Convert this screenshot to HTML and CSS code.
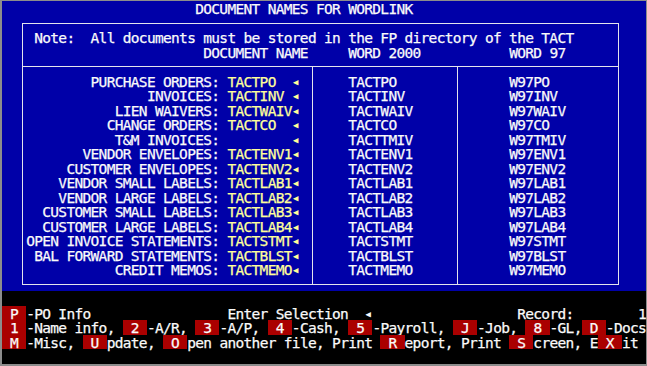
FILE: index.html
```html
<!DOCTYPE html>
<html lang="en">
<head>
  <meta charset="UTF-8" />
  <title>Document Names for WordLink</title>
  <link rel="stylesheet" href="styles.css">
</head>
<body>

  <div class="screen">
    <div class="panel">
      <div class="title">DOCUMENT NAMES FOR WORDLINK</div>

      <div class="frame">
        <div class="note">Note:  All documents must be stored in the FP directory of the TACT</div>
        <div class="heads">DOCUMENT NAME     WORD 2000           WORD 97</div>

        <div class="cols">
          <div class="col col-doc">
            <div class="entry"><span class="label">PURCHASE ORDERS:</span><span class="value">TACTPO</span><span class="arrow">◀</span></div>
            <div class="entry"><span class="label">INVOICES:</span><span class="value">TACTINV</span><span class="arrow">◀</span></div>
            <div class="entry"><span class="label">LIEN WAIVERS:</span><span class="value">TACTWAIV</span><span class="arrow">◀</span></div>
            <div class="entry"><span class="label">CHANGE ORDERS:</span><span class="value">TACTCO</span><span class="arrow">◀</span></div>
            <div class="entry"><span class="label">T&amp;M INVOICES:</span><span class="value"></span><span class="arrow">◀</span></div>
            <div class="entry"><span class="label">VENDOR ENVELOPES:</span><span class="value">TACTENV1</span><span class="arrow">◀</span></div>
            <div class="entry"><span class="label">CUSTOMER ENVELOPES:</span><span class="value">TACTENV2</span><span class="arrow">◀</span></div>
            <div class="entry"><span class="label">VENDOR SMALL LABELS:</span><span class="value">TACTLAB1</span><span class="arrow">◀</span></div>
            <div class="entry"><span class="label">VENDOR LARGE LABELS:</span><span class="value">TACTLAB2</span><span class="arrow">◀</span></div>
            <div class="entry"><span class="label">CUSTOMER SMALL LABELS:</span><span class="value">TACTLAB3</span><span class="arrow">◀</span></div>
            <div class="entry"><span class="label">CUSTOMER LARGE LABELS:</span><span class="value">TACTLAB4</span><span class="arrow">◀</span></div>
            <div class="entry"><span class="label">OPEN INVOICE STATEMENTS:</span><span class="value">TACTSTMT</span><span class="arrow">◀</span></div>
            <div class="entry"><span class="label">BAL FORWARD STATEMENTS:</span><span class="value">TACTBLST</span><span class="arrow">◀</span></div>
            <div class="entry"><span class="label">CREDIT MEMOS:</span><span class="value">TACTMEMO</span><span class="arrow">◀</span></div>
          </div>

          <div class="col col-w2k">
            <div class="cell">TACTPO</div>
            <div class="cell">TACTINV</div>
            <div class="cell">TACTWAIV</div>
            <div class="cell">TACTCO</div>
            <div class="cell">TACTTMIV</div>
            <div class="cell">TACTENV1</div>
            <div class="cell">TACTENV2</div>
            <div class="cell">TACTLAB1</div>
            <div class="cell">TACTLAB2</div>
            <div class="cell">TACTLAB3</div>
            <div class="cell">TACTLAB4</div>
            <div class="cell">TACTSTMT</div>
            <div class="cell">TACTBLST</div>
            <div class="cell">TACTMEMO</div>
          </div>

          <div class="col col-w97">
            <div class="cell">W97PO</div>
            <div class="cell">W97INV</div>
            <div class="cell">W97WAIV</div>
            <div class="cell">W97CO</div>
            <div class="cell">W97TMIV</div>
            <div class="cell">W97ENV1</div>
            <div class="cell">W97ENV2</div>
            <div class="cell">W97LAB1</div>
            <div class="cell">W97LAB2</div>
            <div class="cell">W97LAB3</div>
            <div class="cell">W97LAB4</div>
            <div class="cell">W97STMT</div>
            <div class="cell">W97BLST</div>
            <div class="cell">W97MEMO</div>
          </div>
        </div>
      </div>
    </div>

    <!-- menu / status lines -->
    <div class="menu">
      <div class="mline"><span class="key"> P </span>-PO Info                 Enter Selection  <span class="arrow">◀</span>                  Record:        1</div>
      <div class="mline"><span class="key"> 1 </span>-Name info, <span class="key"> 2 </span>-A/R, <span class="key"> 3 </span>-A/P, <span class="key"> 4 </span>-Cash, <span class="key"> 5 </span>-Payroll, <span class="key"> J </span>-Job, <span class="key"> 8 </span>-GL,<span class="key"> D </span>-Docs</div>
      <div class="mline"><span class="key"> M </span>-Misc, <span class="key"> U </span>pdate, <span class="key"> O </span>pen another file, Print <span class="key"> R </span>eport, Print <span class="key"> S </span>creen, E<span class="key"> X </span>it</div>
    </div>
  </div>

</body>
</html>
```

FILE: styles.css
```css
:root {
  --cw: 8.05px;   /* one text column */
  --ch: 14.5px;   /* one text row */
}
* {
  box-sizing: border-box;
}
body {
  margin: 0;
  height: 366px;
  overflow: hidden;
  background: #8c8c8c;
}
.screen {
  margin: 1px 0 0 2px;
  width: calc(var(--cw) * 80);
  font-family: "DejaVu Sans Mono", monospace;
  font-size: 14.5px;
  letter-spacing: -0.68px;
  line-height: calc(var(--ch) + 2px);
  color: #fafafa;
  -webkit-text-stroke: 0.25px currentColor;
}
.panel {
  height: calc(var(--ch) * 20);
  background: #0000a8;
}
.title {
  height: var(--ch);
  padding-left: calc(var(--cw) * 24);
  white-space: pre;
}
.frame {
  margin: calc(var(--ch) / 2) 0 0 calc(var(--cw) * 2.5);
  width: calc(var(--cw) * 74 + 1px);
  padding-top: calc(var(--ch) / 2 - 1px);
  border: 1px solid #e4e4ec;
}
.note {
  height: var(--ch);
  padding-left: calc(var(--cw) * 1.5 - 1px);
  white-space: pre;
}
.heads {
  height: var(--ch);
  padding-left: calc(var(--cw) * 22.5 - 1px);
  white-space: pre;
}
.cols {
  display: flex;
  margin-top: calc(var(--ch) / 2);
  border-top: 1px solid #e4e4ec;
}
.col {
  padding-top: calc(var(--ch) / 2 - 1px);
  padding-bottom: calc(var(--ch) / 2);
}
.col-doc {
  width: calc(var(--cw) * 36);
  border-right: 1px solid #e4e4ec;
}
.col-w2k {
  width: calc(var(--cw) * 18);
  padding-left: calc(var(--cw) * 4.5 - 1px);
  border-right: 1px solid #e4e4ec;
}
.col-w97 {
  flex: 1;
  padding-left: calc(var(--cw) * 6.5 - 1px);
}
.entry, .cell {
  height: var(--ch);
  white-space: nowrap;
}
.label {
  display: inline-block;
  width: calc(var(--cw) * 24.5 - 1px);
  text-align: right;
}
.value {
  display: inline-block;
  width: calc(var(--cw) * 8);
  margin-left: var(--cw);
  color: #ffff9a;
}
.arrow {
  display: inline-block;
  width: var(--cw);
  font-size: 9px;
  letter-spacing: 0;
  text-align: center;
  vertical-align: 2px;
  -webkit-text-stroke: 0;
}
.entry .arrow {
  color: #ffff9a;
}
.menu {
  height: calc(var(--ch) * 5);
  padding-top: var(--ch);
  background: #000;
}
.mline {
  height: var(--ch);
  white-space: pre;
}
.key {
  display: inline-block;
  height: var(--ch);
  vertical-align: top;
  background: #aa0000;
}
```
